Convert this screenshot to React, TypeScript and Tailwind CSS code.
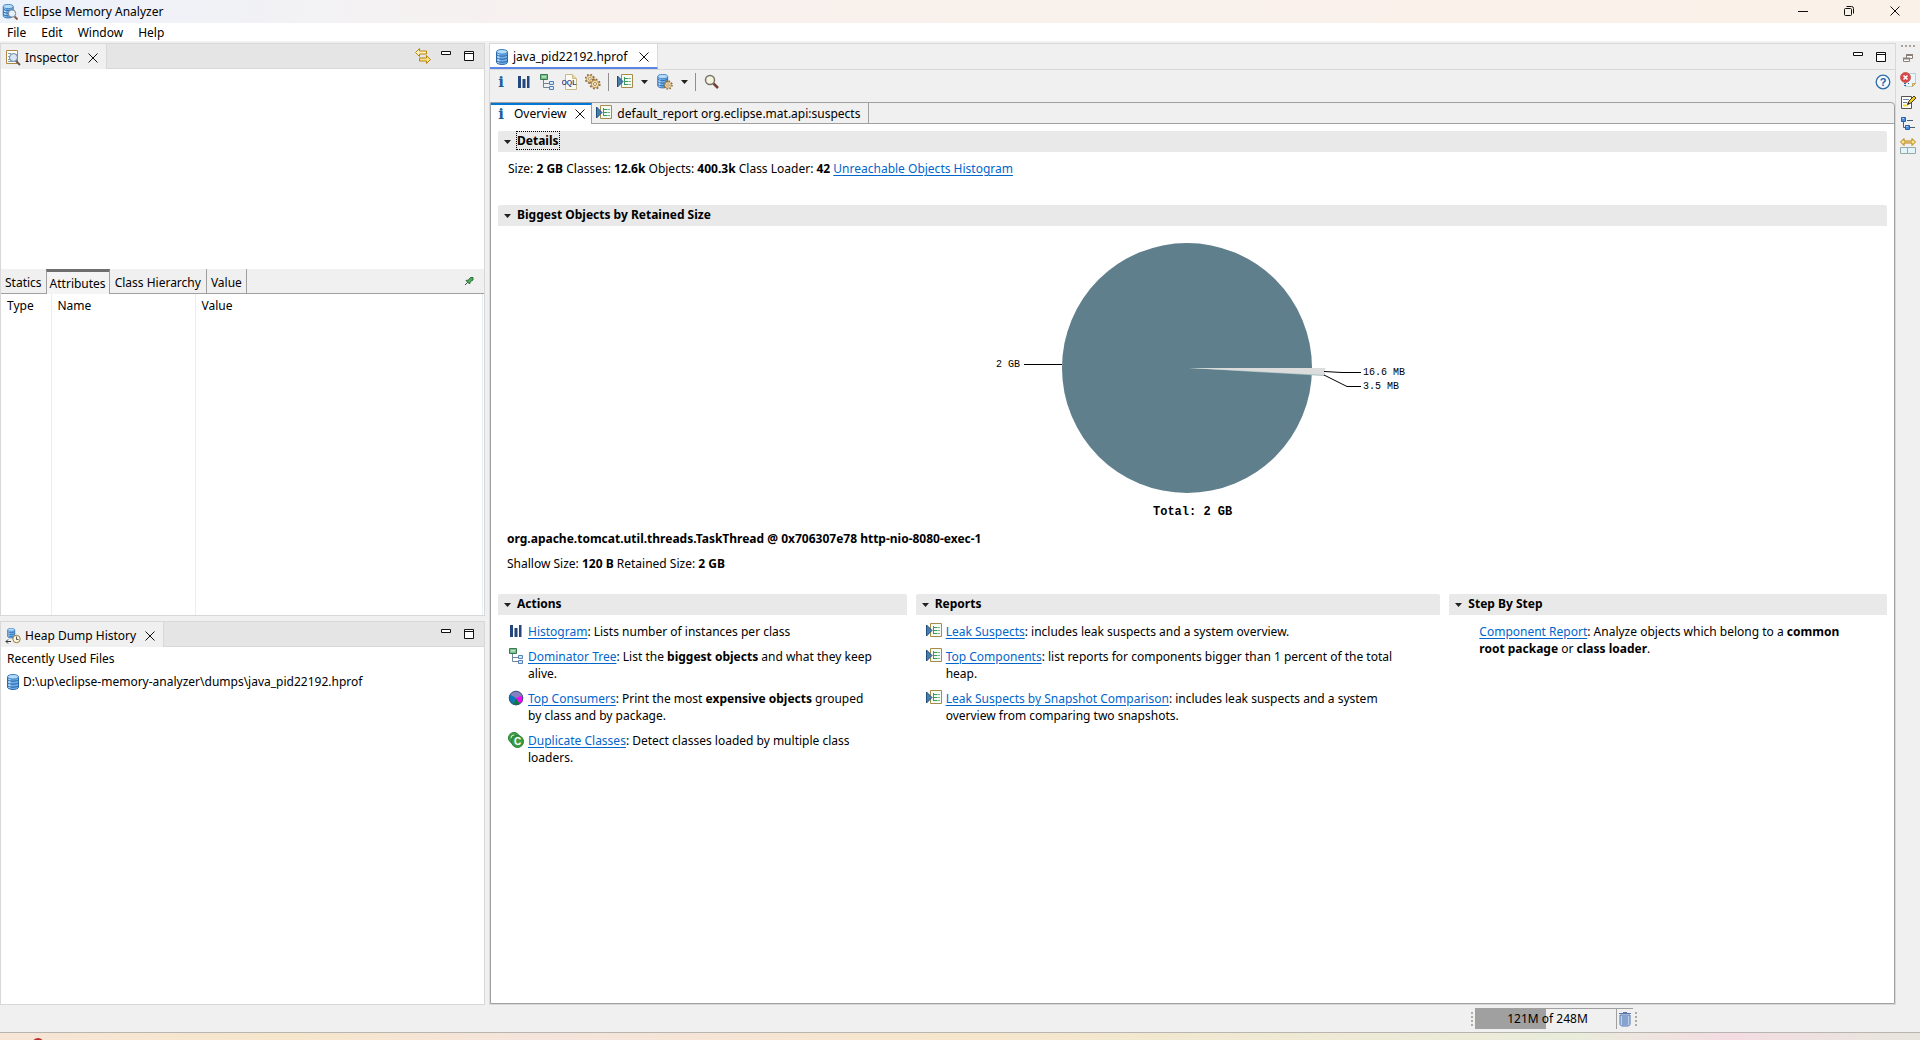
import type { ReactNode } from "react";

type IconProps = { className?: string };

const Svg = ({
  className = "",
  children,
}: {
  className?: string;
  children: ReactNode;
}) => (
  <svg
    viewBox="0 0 16 16"
    className={`size-4 shrink-0 ${className}`}
    aria-hidden="true"
  >
    {children}
  </svg>
);

const Cylinder = () => (
  <>
    <path
      d="M2.500 3v10c0 3.300 11 3.300 11 0V3z"
      fill="#6fb0ec"
      stroke="#2c6bae"
    />
    <path d="M4.500 4.500v9.500" stroke="#c5e4fc" strokeWidth="2" />
    <path
      d="M2.500 5.500c1 2.200 10 2.200 11 0M2.500 8.500c1 2.200 10 2.200 11 0M2.500 11.500c1 2.200 10 2.200 11 0"
      fill="none"
      stroke="#235b9c"
    />
    <ellipse cx="8" cy="2.800" rx="5.500" ry="2.300" fill="#b4dcf9" stroke="#3c80c4" />
  </>
);

const DumpIcon = (props: IconProps) => (
  <Svg {...props}>
    <Cylinder />
  </Svg>
);

const AppIcon = () => (
  <Svg>
    <g transform="translate(-1 0) scale(.9)">
      <Cylinder />
    </g>
    <path d="M12.500 12.500l3 3" stroke="#8a5a3a" strokeWidth="2" />
    <circle cx="10" cy="9.500" r="3.700" fill="#e4f0fa" stroke="#77808c" />
  </Svg>
);

const InspectorIcon = () => (
  <Svg>
    <path d="M1.500.500h11v13h-11z" fill="#fff" stroke="#b08a45" />
    <path d="M3 3.500h3M3 6.500h2M3 9.500h2M3 11.500h5" stroke="#7f9fc4" />
    <path d="M10.500 10.500l4.500 4.500" stroke="#6d5b50" strokeWidth="2" />
    <circle cx="8.500" cy="7.500" r="4" fill="#d6e6f6" stroke="#6d7e92" />
  </Svg>
);

const HistoryIcon = () => (
  <Svg>
    <g transform="translate(1 0) scale(.65)">
      <Cylinder />
    </g>
    <path d="M6 13.500H1M3 11.500l-2 2 2 2" fill="none" stroke="#333" />
    <circle cx="11.500" cy="11" r="3.700" fill="#fff7dd" stroke="#9a7a3a" />
    <path d="M11.500 8.500v3h2" fill="none" stroke="#555" />
  </Svg>
);

const InfoIcon = () => (
  <Svg>
    <text
      x="8"
      y="13"
      textAnchor="middle"
      fill="#1c5f9f"
      className="font-['DejaVu_Serif',serif] text-[15px] font-bold"
    >
      i
    </text>
  </Svg>
);

const HistogramIcon = () => (
  <Svg>
    <path d="M2 2h3v12H2zM6.500 5h3v9h-3zM11 2h2.500v12H11z" fill="#24467c" />
  </Svg>
);

const TreeIcon = () => (
  <Svg>
    <path d="M4.500 6v7.500H10M4.500 9.500H10" fill="none" stroke="#6f8595" />
    <path d="M1.500.500h7v5h-7z" fill="#7dc192" stroke="#387a50" />
    <path d="M3 2h4v1.500H3z" fill="#b7e2c1" />
    <path d="M10.500 7.500h4v3h-4zM10.500 12.500h4v3h-4z" fill="#d5e9fb" stroke="#5580b8" />
  </Svg>
);

const OqlIcon = () => (
  <Svg>
    <path d="M3.500.500h7l4 4v11h-11z" fill="#fbfbf4" stroke="#c9b88a" />
    <path d="M10.500.500v4h4" fill="#edd999" stroke="#c9b88a" />
    <text
      x="7"
      y="11"
      textAnchor="middle"
      fill="#43437e"
      className="font-['Liberation_Sans',sans-serif] text-[7px] font-bold"
    >
      OQL
    </text>
  </Svg>
);

const Gear = () => (
  <>
    <circle
      cx="8"
      cy="8"
      r="6"
      fill="none"
      stroke="#8f6a3c"
      strokeWidth="3"
      strokeDasharray="2.360 2.350"
    />
    <circle cx="8" cy="8" r="5" fill="#f8dfa6" stroke="#a98350" />
    <circle cx="8" cy="8" r="2" fill="#fff" stroke="#8a6a40" />
  </>
);

const GearsIcon = () => (
  <Svg>
    <g transform="translate(-.6 -.6) scale(.68)">
      <Gear />
    </g>
    <g transform="translate(4 4) scale(.75)">
      <Gear />
    </g>
  </Svg>
);

const ReportIcon = () => (
  <Svg>
    <path d="M4.500.500h11v13h-11z" fill="#f3fbf3" stroke="#a68c4c" />
    <path
      d="M7.500 3v8M7.500 4.500h4M7.500 7.500h4M7.500 10.500h4"
      fill="none"
      stroke="#3b9860"
    />
    <path d="M12 4.500h2M12 7.500h2M12 10.500h2" stroke="#7bb28e" />
    <path d="M.500 2v11l5.500-5.500z" fill="#467fae" stroke="#1f4e7c" />
  </Svg>
);

const DumpGearIcon = () => (
  <Svg>
    <g transform="translate(-1.500 0) scale(.9)">
      <Cylinder />
    </g>
    <g transform="translate(6 6) scale(.63)">
      <Gear />
    </g>
  </Svg>
);

const SearchIcon = () => (
  <Svg>
    <path d="M9.500 9.500L14 14" stroke="#754232" strokeWidth="2.500" />
    <circle cx="6" cy="6" r="4.500" fill="#f6f4df" stroke="#74746a" strokeWidth="1.500" />
  </Svg>
);

const PieIcon = () => (
  <Svg>
    <circle cx="8" cy="8" r="7" fill="#8680c0" />
    <path d="M8 8L2 4.500A7 7 0 0 0 5 14.400z" fill="#0879bd" />
    <path d="M8 8l-3 6.400a7 7 0 0 0 7-.400z" fill="#087c43" />
    <path d="M8 8l4 6a7 7 0 0 0 2.500-8.500z" fill="#f0f" />
    <circle cx="8" cy="8" r="6.800" fill="none" stroke="#38577c" />
  </Svg>
);

const ClassesIcon = () => (
  <Svg>
    <circle cx="6" cy="6" r="5.500" fill="#43a047" stroke="#23803a" />
    <path d="M6 3A3 3 0 0 0 3 6" fill="none" stroke="#d4ecd6" />
    <circle cx="9.500" cy="9.500" r="6" fill="#3d9b42" stroke="#23803a" />
    <text
      x="9.500"
      y="13"
      textAnchor="middle"
      fill="#fff"
      className="font-['Liberation_Sans',sans-serif] text-[10px] font-bold"
    >
      C
    </text>
  </Svg>
);

const SyncIcon = () => (
  <Svg>
    <path
      d="M.500 4.500l4-4v2.500h7v3h-7v2.500z"
      fill="#fdf0bd"
      stroke="#b8860b"
    />
    <path
      d="M15.500 11.500l-4-4V10h-7v3h7v2.500z"
      fill="#fbe08a"
      stroke="#b8860b"
    />
  </Svg>
);

const PinIcon = () => (
  <Svg>
    <path d="M4 12l3-3" stroke="#444" />
    <path d="M5 7.500L8.500 11l1-2.500L12 7V4.500H9.500L7.500 7z" fill="#58a55c" stroke="#237238" />
  </Svg>
);

const HelpIcon = () => (
  <Svg>
    <circle cx="8" cy="8" r="6.800" fill="#f5faff" stroke="#2e6ca4" strokeWidth="1.300" />
    <text
      x="8"
      y="12"
      textAnchor="middle"
      fill="#20609c"
      className="font-['Liberation_Sans',sans-serif] text-[11px] font-bold"
    >
      ?
    </text>
  </Svg>
);

const RestoreIcon = () => (
  <Svg>
    <path d="M6.500 4.500h6v4h-6z" fill="#fff" stroke="#8b8178" />
    <path d="M6 5h7" stroke="#8b8178" strokeWidth="2" />
    <path d="M3.500 8.500h6v3h-6z" fill="#fff" stroke="#8b8178" />
    <path d="M3 8.500h7" stroke="#8b8178" strokeWidth="2" />
  </Svg>
);

const ErrorLogIcon = () => (
  <Svg>
    <path d="M5.500 1.500h10v10l-3 3h-7z" fill="#e9f6fb" stroke="#b9cdd4" />
    <path d="M15.500 11.500h-3v3z" fill="#f1cf8d" stroke="#c9a25c" />
    <path d="M4 11.500h2M8 11.500h1M4 13.500h2" stroke="#3564a5" />
    <circle cx="5.500" cy="5.500" r="5" fill="#d9444a" stroke="#c96058" />
    <path d="M3.500 3.500l4 4M7.500 3.500l-4 4" stroke="#fff" strokeWidth="1.700" />
  </Svg>
);

const NotesIcon = () => (
  <Svg>
    <path d="M1.500 2.500h10v12h-10z" fill="#fff" stroke="#56534c" />
    <path d="M3 5.500h6M3 8.500h4" stroke="#7187a5" />
    <path d="M3 10.500h5v2H3z" fill="#f2d83a" />
    <path d="M8 10l1-3 5-5 2 2-5 5z" fill="#edcf22" stroke="#453d18" />
    <path d="M7 11l1-3 2 2z" fill="#222" />
  </Svg>
);

const NavTreeIcon = () => (
  <Svg>
    <path d="M3.500 6v5.500H6M7 4.500h6M10 11.500h5" fill="none" stroke="#4c5c70" />
    <path d="M1.500 1.500h4v4h-4zM5.500 9.500h4v4h-4z" fill="#4a8ede" stroke="#2361ad" />
    <path d="M2 2.500h2M6 10.500h2" stroke="#a9cef8" />
  </Svg>
);

const CompareIcon = () => (
  <Svg>
    <path
      d="M.500 4l3.500-3.500V3h8V.500L15.500 4 12 7.500V5H4v2.500z"
      fill="#fae393"
      stroke="#b68215"
    />
    <path d="M.500 9.500h7v6h-7zM7.500 9.500h8v6h-8z" fill="#e3f5fb" stroke="#98a8a5" />
  </Svg>
);

const TrashIcon = () => (
  <Svg>
    <path d="M3 4h10v9.500L11.500 15h-7L3 13.500z" fill="#b7d2f1" stroke="#5877aa" />
    <path d="M6 5v9M8 5v9M10 5v9" stroke="#5877aa" />
    <path d="M2 2.500h12M6 1.500h4" stroke="#5877aa" />
  </Svg>
);

const CloseIcon = () => (
  <svg viewBox="0 0 10 10" className="size-[10px]" aria-hidden="true">
    <path d="M.500.500l9 9M9.500.500l-9 9" stroke="#111" />
  </svg>
);

const MinimizeIcon = () => (
  <Svg>
    <path d="M3.500 3.500h9v3h-9z" fill="#fff" stroke="#111" />
  </Svg>
);

const MaximizeIcon = () => (
  <Svg>
    <path d="M3.500 3.500h9v9h-9zM3.500 5.500h9" fill="#fff" stroke="#111" />
  </Svg>
);

const IconButton = ({
  label,
  children,
  className = "",
}: {
  label: string;
  children: ReactNode;
  className?: string;
}) => (
  <button
    type="button"
    aria-label={label}
    className={`flex shrink-0 items-center justify-center ${className}`}
  >
    {children}
  </button>
);

const DropArrow = ({ label }: { label: string }) => (
  <IconButton label={label} className="ml-[3px] w-4">
    <svg viewBox="0 0 7 4" className="h-1 w-[7px]" aria-hidden="true">
      <path d="M0 0h7L3.500 4z" fill="#222" />
    </svg>
  </IconButton>
);

const Separator = () => <span className="h-[18px] w-px bg-[#8f8f8f]" />;

const PaneButtons = () => (
  <>
    <IconButton label="Minimize" className="mr-[7px]">
      <MinimizeIcon />
    </IconButton>
    <IconButton label="Maximize">
      <MaximizeIcon />
    </IconButton>
  </>
);

const PaneHeader = ({
  icon,
  title,
  actions,
}: {
  icon: ReactNode;
  title: string;
  actions?: ReactNode;
}) => (
  <div className="flex h-[25px] items-stretch border-b border-[#d8d8d8] bg-[#e5e5e5]">
    <div className="-mb-px flex items-center border-r border-[#d8d8d8] bg-[#f0f0f0] pt-[2px] pr-2 pl-1">
      {icon}
      <h2 className="mr-[9px] ml-1">{title}</h2>
      <IconButton label={`Close ${title}`}>
        <CloseIcon />
      </IconButton>
    </div>
    <div className="ml-auto flex items-center pr-[7px]">
      {actions}
      <PaneButtons />
    </div>
  </div>
);

const Link = ({ children }: { children: ReactNode }) => (
  <a href="#" className="text-[#0066cc] underline underline-offset-2">
    {children}
  </a>
);

const SectionBar = ({
  title,
  focused = false,
}: {
  title: string;
  focused?: boolean;
}) => (
  <button
    type="button"
    className="flex h-[21px] w-full items-center rounded-t-xs bg-[#e9e9e9] pb-[2px] pl-[6px] text-left font-bold"
  >
    <svg viewBox="0 0 7 4" className="mt-[2px] mr-[6px] h-1 w-[7px]" aria-hidden="true">
      <path d="M0 0h7L3.500 4z" fill="#222" />
    </svg>
    <span className={focused ? "outline outline-dotted outline-black" : ""}>
      {title}
    </span>
  </button>
);

const Entry = ({ icon, children }: { icon: ReactNode; children: ReactNode }) => (
  <li className="flex gap-1">
    {icon}
    <p>{children}</p>
  </li>
);

const PieChart = () => (
  <svg
    viewBox="0 0 434 300"
    className="mx-auto h-[300px] w-[434px]"
    role="img"
    aria-label="Biggest objects by retained size"
  >
    <circle cx="211" cy="138" r="125" fill="#607f8d" />
    <path d="M213 138h136v8z" fill="#9fbcbc" />
    <path d="M213 138h136v7z" fill="#dcdcdc" />
    <path
      d="M48 134.500h38M348 141.500l18 1h19M348 145l23 11.500h14"
      fill="none"
      stroke="#000"
    />
    <g className="font-['Liberation_Mono',monospace] text-[10px]">
      <text x="20" y="137">2 GB</text>
      <text x="387" y="145">16.6 MB</text>
      <text x="387" y="159">3.5 MB</text>
      <text x="177" y="285" className="text-[12px] font-bold">
        Total: 2 GB
      </text>
    </g>
  </svg>
);

const Inspector = () => (
  <section className="flex grow-[574] basis-0 flex-col border border-[#d8d8d8] bg-white">
    <PaneHeader
      icon={<InspectorIcon />}
      title="Inspector"
      actions={
        <IconButton label="Link with snapshot" className="mr-[7px]">
          <SyncIcon />
        </IconButton>
      }
    />
    <div className="grow-[201] basis-0" />
    <div className="flex h-[25px] items-stretch border-b border-[#a0a0a0] bg-[#f0f0f0]">
      <button type="button" className="px-1 pt-[2px]">
        Statics
      </button>
      <button
        type="button"
        className="-mb-px border-x border-t-3 border-x-[#a0a0a0] border-t-[#6e6e6e] bg-[#f4f4f4] px-[3px]"
      >
        Attributes
      </button>
      <button type="button" className="border-r border-[#a0a0a0] px-[5px] pt-[2px]">
        Class Hierarchy
      </button>
      <button type="button" className="border-r border-[#a0a0a0] px-1 pt-[2px]">
        Value
      </button>
      <IconButton label="Pin tab" className="mr-[7px] ml-auto">
        <PinIcon />
      </IconButton>
    </div>
    <div className="flex grow-[322] basis-0 pr-px">
      <table className="h-full w-full table-fixed">
        <thead>
          <tr className="text-left align-top">
            <th className="w-[50px] border-r border-[#e8eef8] pt-[3px] pl-[6px] font-normal">
              Type
            </th>
            <th className="w-36 border-r border-[#e8eef8] pt-[3px] pl-[6px] font-normal">
              Name
            </th>
            <th className="border-r border-[#e8eef8] pt-[3px] pl-[6px] font-normal">
              Value
            </th>
          </tr>
        </thead>
      </table>
    </div>
  </section>
);

const History = () => (
  <section className="flex grow-[384] basis-0 flex-col border border-[#d8d8d8] bg-white">
    <PaneHeader icon={<HistoryIcon />} title="Heap Dump History" />
    <h3 className="h-[23px] pt-[3px] pl-[6px]">Recently Used Files</h3>
    <a href="#" className="flex h-[23px] items-center gap-[2px] pl-1">
      <DumpIcon />
      D:\up\eclipse-memory-analyzer\dumps\java_pid22192.hprof
    </a>
  </section>
);

const Toolbar = () => (
  <div className="flex h-[33px] items-center border-t border-[#d8d8d8] pr-1 pb-2 pl-[3px]">
    <div className="flex items-center gap-[7px]">
      <IconButton label="Overview">
        <InfoIcon />
      </IconButton>
      <IconButton label="Histogram">
        <HistogramIcon />
      </IconButton>
      <IconButton label="Dominator tree">
        <TreeIcon />
      </IconButton>
      <IconButton label="OQL">
        <OqlIcon />
      </IconButton>
      <IconButton label="Thread overview">
        <GearsIcon />
      </IconButton>
      <Separator />
    </div>
    <IconButton label="Run report" className="ml-2">
      <ReportIcon />
    </IconButton>
    <DropArrow label="Report list" />
    <IconButton label="Query browser" className="ml-[5px]">
      <DumpGearIcon />
    </IconButton>
    <DropArrow label="Query list" />
    <span className="ml-[3px] flex items-center gap-2">
      <Separator />
      <IconButton label="Find object">
        <SearchIcon />
      </IconButton>
    </span>
    <IconButton label="Help" className="ml-auto">
      <HelpIcon />
    </IconButton>
  </div>
);

const Overview = () => (
  <div className="grow bg-white px-[7px] pt-[7px]">
    <SectionBar title="Details" focused />
    <p className="px-[10px] pt-2 pb-[28px]">
      Size: <b>2 GB</b> Classes: <b>12.6k</b> Objects: <b>400.3k</b> Class
      Loader: <b>42</b> <Link>Unreachable Objects Histogram</Link>
    </p>
    <SectionBar title="Biggest Objects by Retained Size" />
    <div className="pt-1">
      <PieChart />
    </div>
    <p className="px-[9px] font-bold">
      org.apache.tomcat.util.threads.TaskThread @ 0x706307e78
      http-nio-8080-exec-1
    </p>
    <p className="px-[9px] pt-2">
      Shallow Size: <b>120 B</b> Retained Size: <b>2 GB</b>
    </p>
    <div className="mt-[22px] grid grid-cols-[409fr_525fr_438fr] gap-[9px]">
      <section>
        <SectionBar title="Actions" />
        <ul className="flex flex-col gap-2 pt-2 pr-8 pl-[10px]">
          <Entry icon={<HistogramIcon />}>
            <Link>Histogram</Link>: Lists number of instances per class
          </Entry>
          <Entry icon={<TreeIcon />}>
            <Link>Dominator Tree</Link>: List the <b>biggest objects</b> and
            what they keep alive.
          </Entry>
          <Entry icon={<PieIcon />}>
            <Link>Top Consumers</Link>: Print the most <b>expensive objects</b>{" "}
            grouped by class and by package.
          </Entry>
          <Entry icon={<ClassesIcon />}>
            <Link>Duplicate Classes</Link>: Detect classes loaded by multiple
            class loaders.
          </Entry>
        </ul>
      </section>
      <section>
        <SectionBar title="Reports" />
        <ul className="flex flex-col gap-2 pt-2 pr-8 pl-[10px]">
          <Entry icon={<ReportIcon />}>
            <Link>Leak Suspects</Link>: includes leak suspects and a system
            overview.
          </Entry>
          <Entry icon={<ReportIcon />}>
            <Link>Top Components</Link>: list reports for components bigger than
            1 percent of the total heap.
          </Entry>
          <Entry icon={<ReportIcon />}>
            <Link>Leak Suspects by Snapshot Comparison</Link>: includes leak
            suspects and a system overview from comparing two snapshots.
          </Entry>
        </ul>
      </section>
      <section>
        <SectionBar title="Step By Step" />
        <p className="pt-2 pr-8 pl-[30px]">
          <Link>Component Report</Link>: Analyze objects which belong to a{" "}
          <b>common root package</b> or <b>class loader</b>.
        </p>
      </section>
    </div>
  </div>
);

const Editor = () => (
  <main className="flex flex-col border border-[#d8d8d8] bg-[#f0f0f0]">
    <div className="flex h-[25px] items-stretch">
      <div className="flex items-center border-r border-b-2 border-r-[#d8d8d8] border-b-[#5b86e5] bg-white pt-[2px] pr-2 pl-1">
        <DumpIcon />
        <h1 className="mr-3 ml-[3px]">java_pid22192.hprof</h1>
        <IconButton label="Close java_pid22192.hprof">
          <CloseIcon />
        </IconButton>
      </div>
      <div className="ml-auto flex items-center pr-[6px]">
        <PaneButtons />
      </div>
    </div>
    <Toolbar />
    <div className="flex grow flex-col rounded-tr-sm border border-[#a0a0a0]">
      <div className="flex h-[21px] items-stretch border-b border-[#a0a0a0]">
        <div className="-mb-px flex items-center border-t-2 border-r border-t-[#0078d7] border-r-[#a0a0a0] bg-white pr-[6px] pb-[2px] pl-[2px]">
          <InfoIcon />
          <button type="button" className="mr-[9px] ml-[5px]">
            Overview
          </button>
          <IconButton label="Close Overview">
            <CloseIcon />
          </IconButton>
        </div>
        <button
          type="button"
          className="flex items-center gap-[5px] border-r border-[#a0a0a0] pr-2 pl-1"
        >
          <ReportIcon />
          default_report org.eclipse.mat.api:suspects
        </button>
      </div>
      <Overview />
    </div>
  </main>
);

const TrimBar = () => (
  <aside className="flex flex-col items-center gap-[6px] bg-[#f0f0f0] pt-[2px]">
    <span className="-mb-[3px] w-[14px] border-t-2 border-dotted border-[#aaa39a]" />
    <IconButton label="Restore">
      <RestoreIcon />
    </IconButton>
    <IconButton label="Error Log">
      <ErrorLogIcon />
    </IconButton>
    <IconButton label="Notes">
      <NotesIcon />
    </IconButton>
    <IconButton label="Navigation History">
      <NavTreeIcon />
    </IconButton>
    <IconButton label="Compare Basket">
      <CompareIcon />
    </IconButton>
  </aside>
);

const StatusBar = () => (
  <footer className="flex h-[28px] shrink-0 items-start justify-end border-b border-[#b8b5b1] bg-[#f0f0f0] pt-[3px] pr-[283px]">
    <span className="mt-1 mr-[2px] h-[14px] border-l-2 border-dotted border-[#b0aaa0]" />
    <div className="relative flex h-[21px] w-[142px] items-center justify-center border-t border-r border-[#a0a0a0] pb-[2px] pl-1">
      <div className="absolute inset-y-0 left-0 w-1/2 bg-[#a0a0a0]" />
      <span className="relative">121M of 248M</span>
    </div>
    <IconButton
      label="Run garbage collector"
      className="h-[21px] w-4 border-t border-[#a0a0a0]"
    >
      <TrashIcon />
    </IconButton>
    <span className="mt-1 ml-[2px] h-[14px] border-l-2 border-dotted border-[#b0aaa0]" />
  </footer>
);

const TitleBar = () => (
  <header className="flex h-[23px] shrink-0 items-center bg-linear-to-r from-[#ecf2fb] via-[#f8f1ee] via-30% to-[#faf1e8] pl-[2px]">
    <AppIcon />
    <span className="ml-[5px]">Eclipse Memory Analyzer</span>
    <div className="ml-auto flex h-full pr-[2px] pb-[2px]">
      <IconButton label="Minimize window" className="w-[46px]">
        <svg viewBox="0 0 10 10" className="size-[10px]">
          <path d="M0 5.500h10" stroke="#111" />
        </svg>
      </IconButton>
      <IconButton label="Restore window" className="w-[46px]">
        <svg viewBox="0 0 10 10" className="size-[10px]" fill="none">
          <rect x=".5" y="2.500" width="7" height="7" rx="1" stroke="#111" />
          <path d="M2.500.500h5a2 2 0 0 1 2 2v5" stroke="#111" />
        </svg>
      </IconButton>
      <IconButton label="Close window" className="w-[46px]">
        <CloseIcon />
      </IconButton>
    </div>
  </header>
);

const menus = ["File", "Edit", "Window", "Help"];

export default function App() {
  return (
    <div className="flex min-h-screen flex-col bg-[#f0f0f0] font-['Noto_Sans',sans-serif] text-[12px] leading-[17px] text-black">
      <TitleBar />
      <nav className="flex h-[18px] shrink-0 items-center gap-[15px] bg-white pl-[7px]">
        {menus.map((menu) => (
          <button type="button" key={menu}>
            {menu}
          </button>
        ))}
      </nav>
      <div className="mt-[2px] grid grow grid-cols-[489fr_1407fr_24px]">
        <div className="mr-1 flex flex-col gap-[5px]">
          <Inspector />
          <History />
        </div>
        <Editor />
        <TrimBar />
      </div>
      <StatusBar />
      <div className="h-[7px] shrink-0 overflow-hidden bg-[linear-gradient(to_right,#f7e5d6,#f6e6cb_15%,#f5e4dc_28%,#f6e6cb_50%,#e9ecdb_82%,#f4dce2_90%,#e7e6dd)] pl-8">
        <div className="mt-[5px] size-3 rounded-full bg-[#b7302b]" />
      </div>
    </div>
  );
}
